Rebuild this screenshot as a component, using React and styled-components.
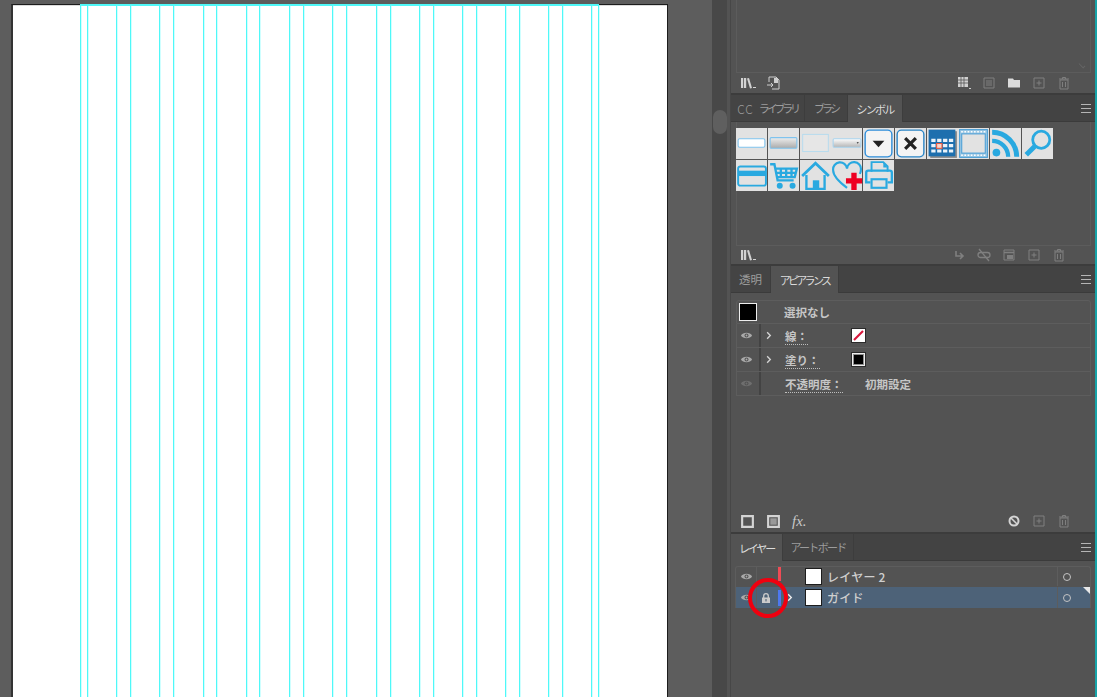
import React from 'react';
import styled, { createGlobalStyle } from 'styled-components';

const Global = createGlobalStyle`
  html, body { margin: 0; padding: 0; background: #5b5b5b; overflow: hidden; }
  #root { width: 1097px; height: 697px; overflow: hidden; }
  * { box-sizing: border-box; }
`;

const Screen = styled.div`
  position: relative; width: 1097px; height: 697px; display: flex; overflow: hidden;
  background: #5b5b5b;
  font-family: "Noto Sans CJK JP", "Noto Sans", sans-serif;
  font-size: 11px; color: #c8c8c8;
`;
const CanvasArea = styled.div`
  width: 712px; height: 697px; flex: none; padding: 4px 0 0 11px; background: #5d5d5d;
`;
const Artboard = styled.div`
  position: relative; width: 657px; height: 700px; background: #fff;
  border: 1px solid #1c1c1c; border-bottom: 0; border-left: 2px solid #333;
  box-shadow: inset 0 1px 0 #dcdcdc;
`;
const GuideH = styled.div`
  position: absolute; left: 67px; top: -1px; width: 519px; height: 2px; background: #4ff8f8;
`;
const Guide = styled.div.attrs(p => ({ style: { left: p.$x } }))`
  position: absolute; top: 0; bottom: 0; width: 1px; background: #4ff8f8;
  box-shadow: 1px 0 0 rgba(120, 255, 255, .35);
`;
const Rail = styled.div`
  width: 15px; height: 697px; flex: none; background: #484848; padding: 110px 1px 0;
`;
const Thumb = styled.div`
  height: 24px; width: 14px; border-radius: 7px; background: #5f5f5f;
`;
const Gutter = styled.div`
  width: 3px; flex: none; background: #535353;
`;
const Dock = styled.div`
  width: 365px; flex: none; height: 697px; display: flex; flex-direction: column;
  background: #535353; border-left: 1px solid #474747;
`;
const Edge = styled.div`
  width: 2px; flex: none; background: #17a3a8;
`;
const Panel = styled.section`
  height: ${p => p.$h}px; flex: none; display: flex; flex-direction: column;
  border-bottom: ${p => (p.$last ? '0' : '2px solid #3c3c3c')};
`;
const TabBar = styled.div`
  height: 27px; flex: none; display: flex; align-items: flex-end; background: #434343;
  border-bottom: 1px solid #3b3b3b;
`;
const Tab = styled.div`
  height: ${p => (p.$active ? '27px' : '26px')}; margin-bottom: ${p => (p.$active ? '-1px' : '0')};
  width: ${p => p.$w}px; display: flex; align-items: center; justify-content: center;
  background: ${p => (p.$active ? '#535353' : '#444444')};
  color: ${p => (p.$active ? '#dcdcdc' : '#9c9c9c')};
  border-right: 1px solid #3d3d3d; letter-spacing: ${p => p.$ls ?? -1.2}px; white-space: nowrap;
  font-size: ${p => p.$fs || 11}px;
`;
const CC = styled.span`
  letter-spacing: 1px; margin-right: 5px; font-size: 12px; font-weight: 300;
`;
const MenuBtn = styled.div`
  margin: 0 4px 0 auto; align-self: center; width: 10px; height: 9px;
  border-top: 1px solid #b5b5b5; border-bottom: 1px solid #b5b5b5; position: relative;
  &::after { content: ""; position: absolute; left: 0; right: 0; top: 3px; height: 1px; background: #b5b5b5; }
`;
const Well = styled.div`
  margin: 0 4px 0 5px; flex: 1; min-height: 0; border: 1px solid #5c5c5c;
  border-top: 0; position: relative;
`;
const Scroll = styled.div`
  position: absolute; right: 4px; bottom: 5px; width: 8px; height: 4px;
  border-right: 1px solid #666; border-bottom: 1px solid #666; transform: rotate(45deg) scale(.8);
`;
const Footer = styled.div`
  height: ${p => p.$h || 20}px; flex: none; display: flex; align-items: center;
  padding: 0 ${p => p.$pr || 24}px 0 9px; gap: 11px;
`;
const Spacer = styled.div` flex: 1; `;
const Ico = styled.svg`
  width: ${p => p.$s || 14}px; height: ${p => p.$s || 14}px; flex: none; display: block;
  opacity: ${p => (p.$dim ? 0.32 : 1)};
`;

const SymbolGrid = styled.div`
  display: grid; grid-template-columns: repeat(10, 31px); grid-auto-rows: 31px; gap: 1px 0.75px;
  padding: 6px 0 0 0; margin-left: -1px;
`;
const Cell = styled.div`
  background: #e2e2e2; display: flex; align-items: center; justify-content: center;
  width: 31px; height: 31px;
`;
const Sym = styled.svg` width: 31px; height: 31px; display: block; `;

const AppWell = styled.div`
  margin: 7px 4px 0 5px; flex: 1; min-height: 0; display: flex; flex-direction: column;
`;
const AppRow = styled.div`
  height: 24px; flex: none; display: flex; align-items: center; border: 1px solid #5d5d5d;
  border-top: ${p => (p.$first ? '1px solid #5d5d5d' : '0')}; border-radius: ${p => (p.$first ? '3px 3px 0 0' : '0')};
  font-weight: 700; font-size: 11.5px; color: #c6c6c6;
`;
const EyeCol = styled.div`
  width: 24px; height: 100%; flex: none; display: flex; align-items: center; justify-content: center;
  padding-right: 3px; border-right: 2px solid #434343;
`;
const Chev = styled.div`
  width: 24px; flex: none; display: flex; align-items: center; padding-left: 3px;
`;
const Dotted = styled.span`
  border-bottom: 1px dotted #bdbdbd; line-height: 13px; letter-spacing: 0;
`;
const Label = styled.div`
  width: ${p => p.$w || 66}px; flex: none;
`;
const ChipBase = styled.div`
  width: 15px; height: 15px; border: 1px solid #2b2b2b; flex: none;
`;
const StrokeChip = styled(ChipBase)`
  background: #fff;
`;
const FillInner = styled.div`
  width: 100%; height: 100%; background: #000; border: 2px solid #8e8e8e; outline: 1px solid #eee; outline-offset: -1px;
`;
const BigChip = styled.div`
  width: 18px; height: 18px; background: #000; border: 1px solid #eee; margin: 0 0 0 2px;
`;
const BigGap = styled.div` width: 27px; flex: none; `;
const LayerList = styled.div`
  margin: 5px 4px 0 4px; border: 1px solid #5d5d5d; border-radius: 3px 3px 0 0; border-bottom: 0;
`;
const LayerRow = styled.div`
  height: 21px; display: flex; align-items: center; position: relative;
  background: ${p => (p.$sel ? '#4d6278' : 'transparent')}; font-size: 12px; color: #cfcfcf;
  font-weight: 500;
  &:first-child { height: 20px; padding-bottom: 1px; }
`;
const LEye = styled.div`
  width: 20px; flex: none; display: flex; justify-content: center;
`;
const LLock = styled.div`
  width: 22px; height: 100%; flex: none; display: flex; justify-content: center; align-items: center;
  border-left: 1px solid #5d5d5d; padding-right: 4px;
`;
const ColorBar = styled.div`
  width: 3px; height: ${p => p.$h}px; background: ${p => p.$c}; flex: none; align-self: ${p => (p.$top ? 'flex-start' : 'center')};
`;
const LChev = styled.div`
  width: 24px; flex: none; display: flex; padding-left: 4px;
`;
const Thumbnail = styled.div`
  width: 17px; height: 17px; background: #fff; border: 1px solid #1d1d1d; flex: none; margin-right: 5px;
`;
const LName = styled.div` flex: 1; white-space: pre; letter-spacing: .25px; `;
const Target = styled.div`
  width: 33px; height: 100%; flex: none; border-left: 1px solid #5d5d5d;
  display: flex; align-items: center; padding-left: 5px;
`;
const Ring = styled.div`
  width: 8px; height: 8px; border-radius: 50%; border: 1.5px solid #c4c4c4;
`;
const Corner = styled.div`
  position: absolute; right: 0; top: 0; width: 0; height: 0;
  border-top: 7px solid #e8e8e8; border-left: 7px solid transparent;
`;
const RedRing = styled.div`
  position: absolute; left: 748px; top: 578px; width: 40px; height: 40px; border-radius: 50%;
  border: 4px solid #f0000f;
`;
const Fx = styled.span`
  font-family: "Liberation Serif", serif; font-style: italic; font-size: 15px; color: #c8c8c8;
`;

const C = '#29a9e0';
const guides = [80, 87, 116, 130, 159, 173, 203, 216, 246, 259, 289, 303, 332, 346, 376, 390, 419, 433, 462, 476, 505, 519, 548, 562, 591, 598];

const Lib = () => (
  <Ico viewBox="0 0 16 14" $s={16}>
    <g fill="#d2d2d2"><rect x="1" y="2" width="2.200" height="10" /><rect x="4" y="2" width="2.200" height="10" /><path d="M7 2.500l2-.5 3 10-2 .5z" /><rect x="13" y="11" width="3" height="1" /></g>
  </Ico>
);
const Place = () => (
  <Ico viewBox="0 0 14 14"><path d="M2 6V1h7l3 3v9H5" fill="none" stroke="#cfcfcf" /><path d="M7 2h4v5H7z" fill="#cfcfcf" /><path d="M0 9h6M4 7l2 2-2 2" fill="none" stroke="#cfcfcf" /></Ico>
);
const Swatches = () => (
  <Ico viewBox="0 0 14 14"><path d="M1 1h10v10H1z" fill="#d0d0d0" /><path d="M1 4h10M1 7h10M4 1v10M7 1v10" stroke="#555" strokeWidth=".8" /><rect x="12" y="12" width="2.500" height="1" fill="#ccc" /></Ico>
);
const ListIco = () => (
  <Ico viewBox="0 0 14 14" $dim><path d="M2 2h10v10H2z" fill="none" stroke="#ddd" /><path d="M4 5h6M4 7h6M4 9h6" stroke="#ddd" /></Ico>
);
const Folder = () => (
  <Ico viewBox="0 0 14 14"><path d="M1 2.500h5l1 1.500h6v7.500H1z" fill="#dcdcdc" /></Ico>
);
const NewIco = () => (
  <Ico viewBox="0 0 14 14" $dim><path d="M2 2h10v10H2z" fill="none" stroke="#ddd" /><path d="M7 4.500v5M4.500 7h5" stroke="#ddd" /></Ico>
);
const Trash = () => (
  <Ico viewBox="0 0 14 14" $dim><path d="M3 4h8v9H3zM2 3h10M5.500 3V1.500h3V3M5.500 6v5M8.500 6v5" fill="none" stroke="#ddd" /></Ico>
);
const Arrow = () => (
  <Ico viewBox="0 0 14 14" $dim><path d="M4 3v5h7M8 5l3 3-3 3" fill="none" stroke="#ddd" strokeWidth="1.6" /></Ico>
);
const Unlink = () => (
  <Ico viewBox="0 0 14 14" $dim><rect x="1" y="4.500" width="12" height="5" rx="2.500" fill="none" stroke="#ddd" strokeWidth="1.300" /><path d="M2 1l10 12" stroke="#ddd" strokeWidth="1.300" /></Ico>
);
const Panelish = () => (
  <Ico viewBox="0 0 14 14" $dim><path d="M2 2h10v10H2z" fill="none" stroke="#ddd" /><path d="M2 4.500h10" stroke="#ddd" strokeWidth="1.500" /><path d="M5 7h6v4H5z" fill="#ddd" /></Ico>
);
const Square = ({ filled }) => (
  <Ico viewBox="0 0 14 14" $s={15}><path d="M2 2h10v10H2z" fill="none" stroke="#d4d4d4" strokeWidth="2" />{filled && <rect x="4" y="4" width="6" height="6" fill="#9a9a9a" />}</Ico>
);
const Forbid = () => (
  <Ico viewBox="0 0 14 14"><circle cx="7" cy="7" r="4.500" fill="none" stroke="#d4d4d4" strokeWidth="2" /><path d="M4 4l6 6" stroke="#d4d4d4" strokeWidth="1.600" /></Ico>
);
const EyeSvg = styled(Ico)` opacity: ${p => (p.$faint ? 0.32 : 1)}; `;
const Eye = ({ faint }) => (
  <EyeSvg viewBox="0 0 14 10" $s={13} $faint={faint}>
    <path d="M1 5c2-4 10-4 12 0-2 4-10 4-12 0z" fill="#a9a9a9" /><circle cx="7" cy="5" r="2.100" fill="#535353" /><circle cx="7" cy="5" r="1" fill="#a9a9a9" />
  </EyeSvg>
);
const Chevron = ({ c = '#d4d4d4' }) => (
  <Ico viewBox="0 0 8 10" $s={9}><path d="M2.500 1.500L6 5 2.500 8.500" fill="none" stroke={c} strokeWidth="1.500" /></Ico>
);
const Lock = () => (
  <Ico viewBox="0 0 12 12" $s={12}><path d="M3.700 6V4a2.300 2.300 0 0 1 4.600 0v2" fill="none" stroke="#cbcbcb" strokeWidth="1.300" /><rect x="2" y="5.500" width="8" height="5.500" fill="#cbcbcb" /><rect x="5.400" y="7" width="1.200" height="2.400" fill="#5a6a7c" /></Ico>
);

const syms = [
  <><rect x="2" y="10" width="25" height="8" rx="1.500" fill="#fff" stroke="#7fc3ee" /></>,
  <><defs><linearGradient id="g1" x1="0" y1="0" x2="0" y2="1"><stop offset="0" stopColor="#eee" /><stop offset="1" stopColor="#aaa" /></linearGradient></defs><rect x="2" y="9" width="25" height="10" rx="1" fill="url(#g1)" stroke="#7fc3ee" /></>,
  <><rect x="2.500" y="6" width="24" height="16" fill="#e6e6e6" stroke="#b9dcee" /></>,
  <><defs><linearGradient id="g2" x1="0" y1="0" x2="0" y2="1"><stop offset="0" stopColor="#fff" /><stop offset="1" stopColor="#b5b5b5" /></linearGradient></defs><rect x="2" y="10" width="26" height="8" rx="1" fill="url(#g2)" stroke="#a8d3ee" /><path d="M24 13h2l-1 2z" fill="#555" /></>,
  <><rect x="2" y="2" width="25" height="25" rx="4" fill="#f4f4f4" stroke="#2f8fdc" strokeWidth="1.300" /><path d="M9 12h11l-5.500 6z" fill="#222" /></>,
  <><rect x="2" y="2" width="25" height="25" rx="4" fill="#f4f4f4" stroke="#2b86c8" strokeWidth="1.300" /><path d="M9.500 9.500l10 10M19.500 9.500l-10 10" stroke="#222" strokeWidth="3" /></>,
  <><rect x="3" y="3" width="25" height="25" fill="#8c8c8c" /><rect x="1.500" y="1.500" width="25" height="25" fill="#1d6fae" /><path d="M4 10h4v3H4zM9.500 10h4v3h-4zM15 10h4v3h-4zM20.500 10h4v3h-4zM4 15h4v3H4zM15 15h4v3h-4zM20.500 15h4v3h-4zM4 20h4v3H4zM9.500 20h4v3h-4zM15 20h4v3h-4zM20.500 20h4v3h-4z" fill="#eaf3fa" /><rect x="9" y="14.500" width="5" height="4.500" fill="#f6d8cf" stroke="#f05a3c" /></>,
  <><rect x="1.500" y="1.500" width="26" height="26" fill="#9fc9e4" stroke="#4c9fd6" /><rect x="3.500" y="5.500" width="22" height="18" fill="#e2e2e2" stroke="#4c9fd6" /><path d="M3 3.500h24M3 25.500h24" stroke="#fff" strokeWidth="1.400" strokeDasharray="1.500 1.500" /></>,
  <><circle cx="6" cy="23" r="3.600" fill={C} /><path d="M2 12a15 15 0 0 1 15 15" fill="none" stroke={C} strokeWidth="4" /><path d="M2 4a23 23 0 0 1 23 23" fill="none" stroke={C} strokeWidth="4.600" /></>,
  <><circle cx="18" cy="11" r="8" fill="none" stroke={C} strokeWidth="2.600" /><path d="M12 17L4 25" stroke={C} strokeWidth="4.600" /></>,
  <><rect x="2" y="6" width="26" height="18" rx="2" fill="none" stroke={C} strokeWidth="1.800" /><rect x="2" y="10" width="26" height="5" fill={C} /></>,
  <><path d="M2 4h4l3 15h15M7 8h20l-2 8H9M12 8v8M17 8v8M22 8v8M8 12h18" fill="none" stroke={C} strokeWidth="2.200" /><circle cx="11" cy="24" r="2.800" fill={C} /><circle cx="23" cy="24" r="2.800" fill={C} /></>,
  <><path d="M2 15L14.500 3 27 15" fill="none" stroke={C} strokeWidth="2.600" /><path d="M6 14v13h17V14" fill="none" stroke={C} strokeWidth="2.200" /><rect x="12" y="19" width="6" height="8" fill={C} /></>,
  <><path d="M15 26C7 20 2 15 2 9.500a6.500 6.500 0 0 1 13-1.500 6.500 6.500 0 0 1 13 1c0 2-.5 3-1 4" fill="none" stroke={C} strokeWidth="2" /><path d="M19 12h5v5h5v5h-5v6h-5v-6h-5v-5h5z" fill="#ee0022" /></>,
  <><path d="M8 11V2h11l4 4v5" fill="none" stroke={C} strokeWidth="1.800" /><path d="M19 2v5h4" fill={C} /><path d="M7 21H3V12a2 2 0 0 1 2-2h20a2 2 0 0 1 2 2v9h-4" fill="none" stroke={C} strokeWidth="2.200" /><rect x="8" y="18" width="14" height="8" fill="none" stroke={C} strokeWidth="2" /></>,
];

export default function App() {
  return (
    <>
      <Global />
      <Screen>
        <CanvasArea>
          <Artboard>
            <GuideH />
            {guides.map(x => <Guide key={x} $x={x - 13} />)}
          </Artboard>
        </CanvasArea>
        <Rail><Thumb /></Rail>
        <Gutter />
        <Dock>
          <Panel $h={95}>
            <Well><Scroll /></Well>
            <Footer $h={20}>
              <Lib /><Place />
              <Spacer />
              <Swatches /><ListIco /><Folder /><NewIco /><Trash />
            </Footer>
          </Panel>
          <Panel $h={171}>
            <TabBar>
              <Tab $w={74} $ls={-3.2}><CC>CC</CC>ライブラリ</Tab>
              <Tab $w={43} $ls={-3}>ブラシ</Tab>
              <Tab $active $w={55} $ls={-1.7}>シンボル</Tab>
              <MenuBtn />
            </TabBar>
            <Well>
              <SymbolGrid>
                {syms.map((s, i) => <Cell key={i}><Sym viewBox="0 0 29 29">{s}</Sym></Cell>)}
              </SymbolGrid>
            </Well>
            <Footer $h={18} $pr={29}>
              <Lib />
              <Spacer />
              <Arrow /><Unlink /><Panelish /><NewIco /><Trash />
            </Footer>
          </Panel>
          <Panel $h={268}>
            <TabBar>
              <Tab $w={40} $ls={0} $fs={11.500}>透明</Tab>
              <Tab $active $w={68} $ls={-2.700}>アピアランス</Tab>
              <MenuBtn />
            </TabBar>
            <AppWell>
              <AppRow $first>
                <BigChip />
                <BigGap />
                <span>選択なし</span>
              </AppRow>
              <AppRow>
                <EyeCol><Eye /></EyeCol>
                <Chev><Chevron /></Chev>
                <Label><Dotted>線：</Dotted></Label>
                <StrokeChip><Ico viewBox="0 0 13 13" $s={13}><path d="M2 11L11 2" stroke="#d8173c" strokeWidth="2.200" /></Ico></StrokeChip>
              </AppRow>
              <AppRow>
                <EyeCol><Eye /></EyeCol>
                <Chev><Chevron /></Chev>
                <Label><Dotted>塗り：</Dotted></Label>
                <ChipBase><FillInner /></ChipBase>
              </AppRow>
              <AppRow>
                <EyeCol><Eye faint /></EyeCol>
                <Chev />
                <Label $w={80}><Dotted>不透明度：</Dotted></Label>
                <span>初期設定</span>
              </AppRow>
            </AppWell>
            <Footer $h={22}>
              <Square /><Square filled />
              <Fx>fx.</Fx>
              <Spacer />
              <Forbid /><NewIco /><Trash />
            </Footer>
          </Panel>
          <Panel $last $h={163}>
            <TabBar>
              <Tab $active $w={52} $ls={-2.200}>レイヤー</Tab>
              <Tab $w={71} $ls={-1.700}>アートボード</Tab>
              <MenuBtn />
            </TabBar>
            <LayerList>
              <LayerRow>
                <LEye><Eye /></LEye>
                <LLock />
                <ColorBar $top $c="#ef4b55" $h={14} />
                <LChev />
                <Thumbnail />
                <LName>レイヤー 2</LName>
                <Target><Ring /></Target>
              </LayerRow>
              <LayerRow $sel>
                <LEye><Eye /></LEye>
                <LLock><Lock /></LLock>
                <ColorBar $c="#4d78f0" $h={16} />
                <LChev><Chevron c="#eee" /></LChev>
                <Thumbnail />
                <LName>ガイド</LName>
                <Target><Ring /></Target>
                <Corner />
              </LayerRow>
            </LayerList>
          </Panel>
        </Dock>
        <Edge />
        <RedRing />
      </Screen>
    </>
  );
}
